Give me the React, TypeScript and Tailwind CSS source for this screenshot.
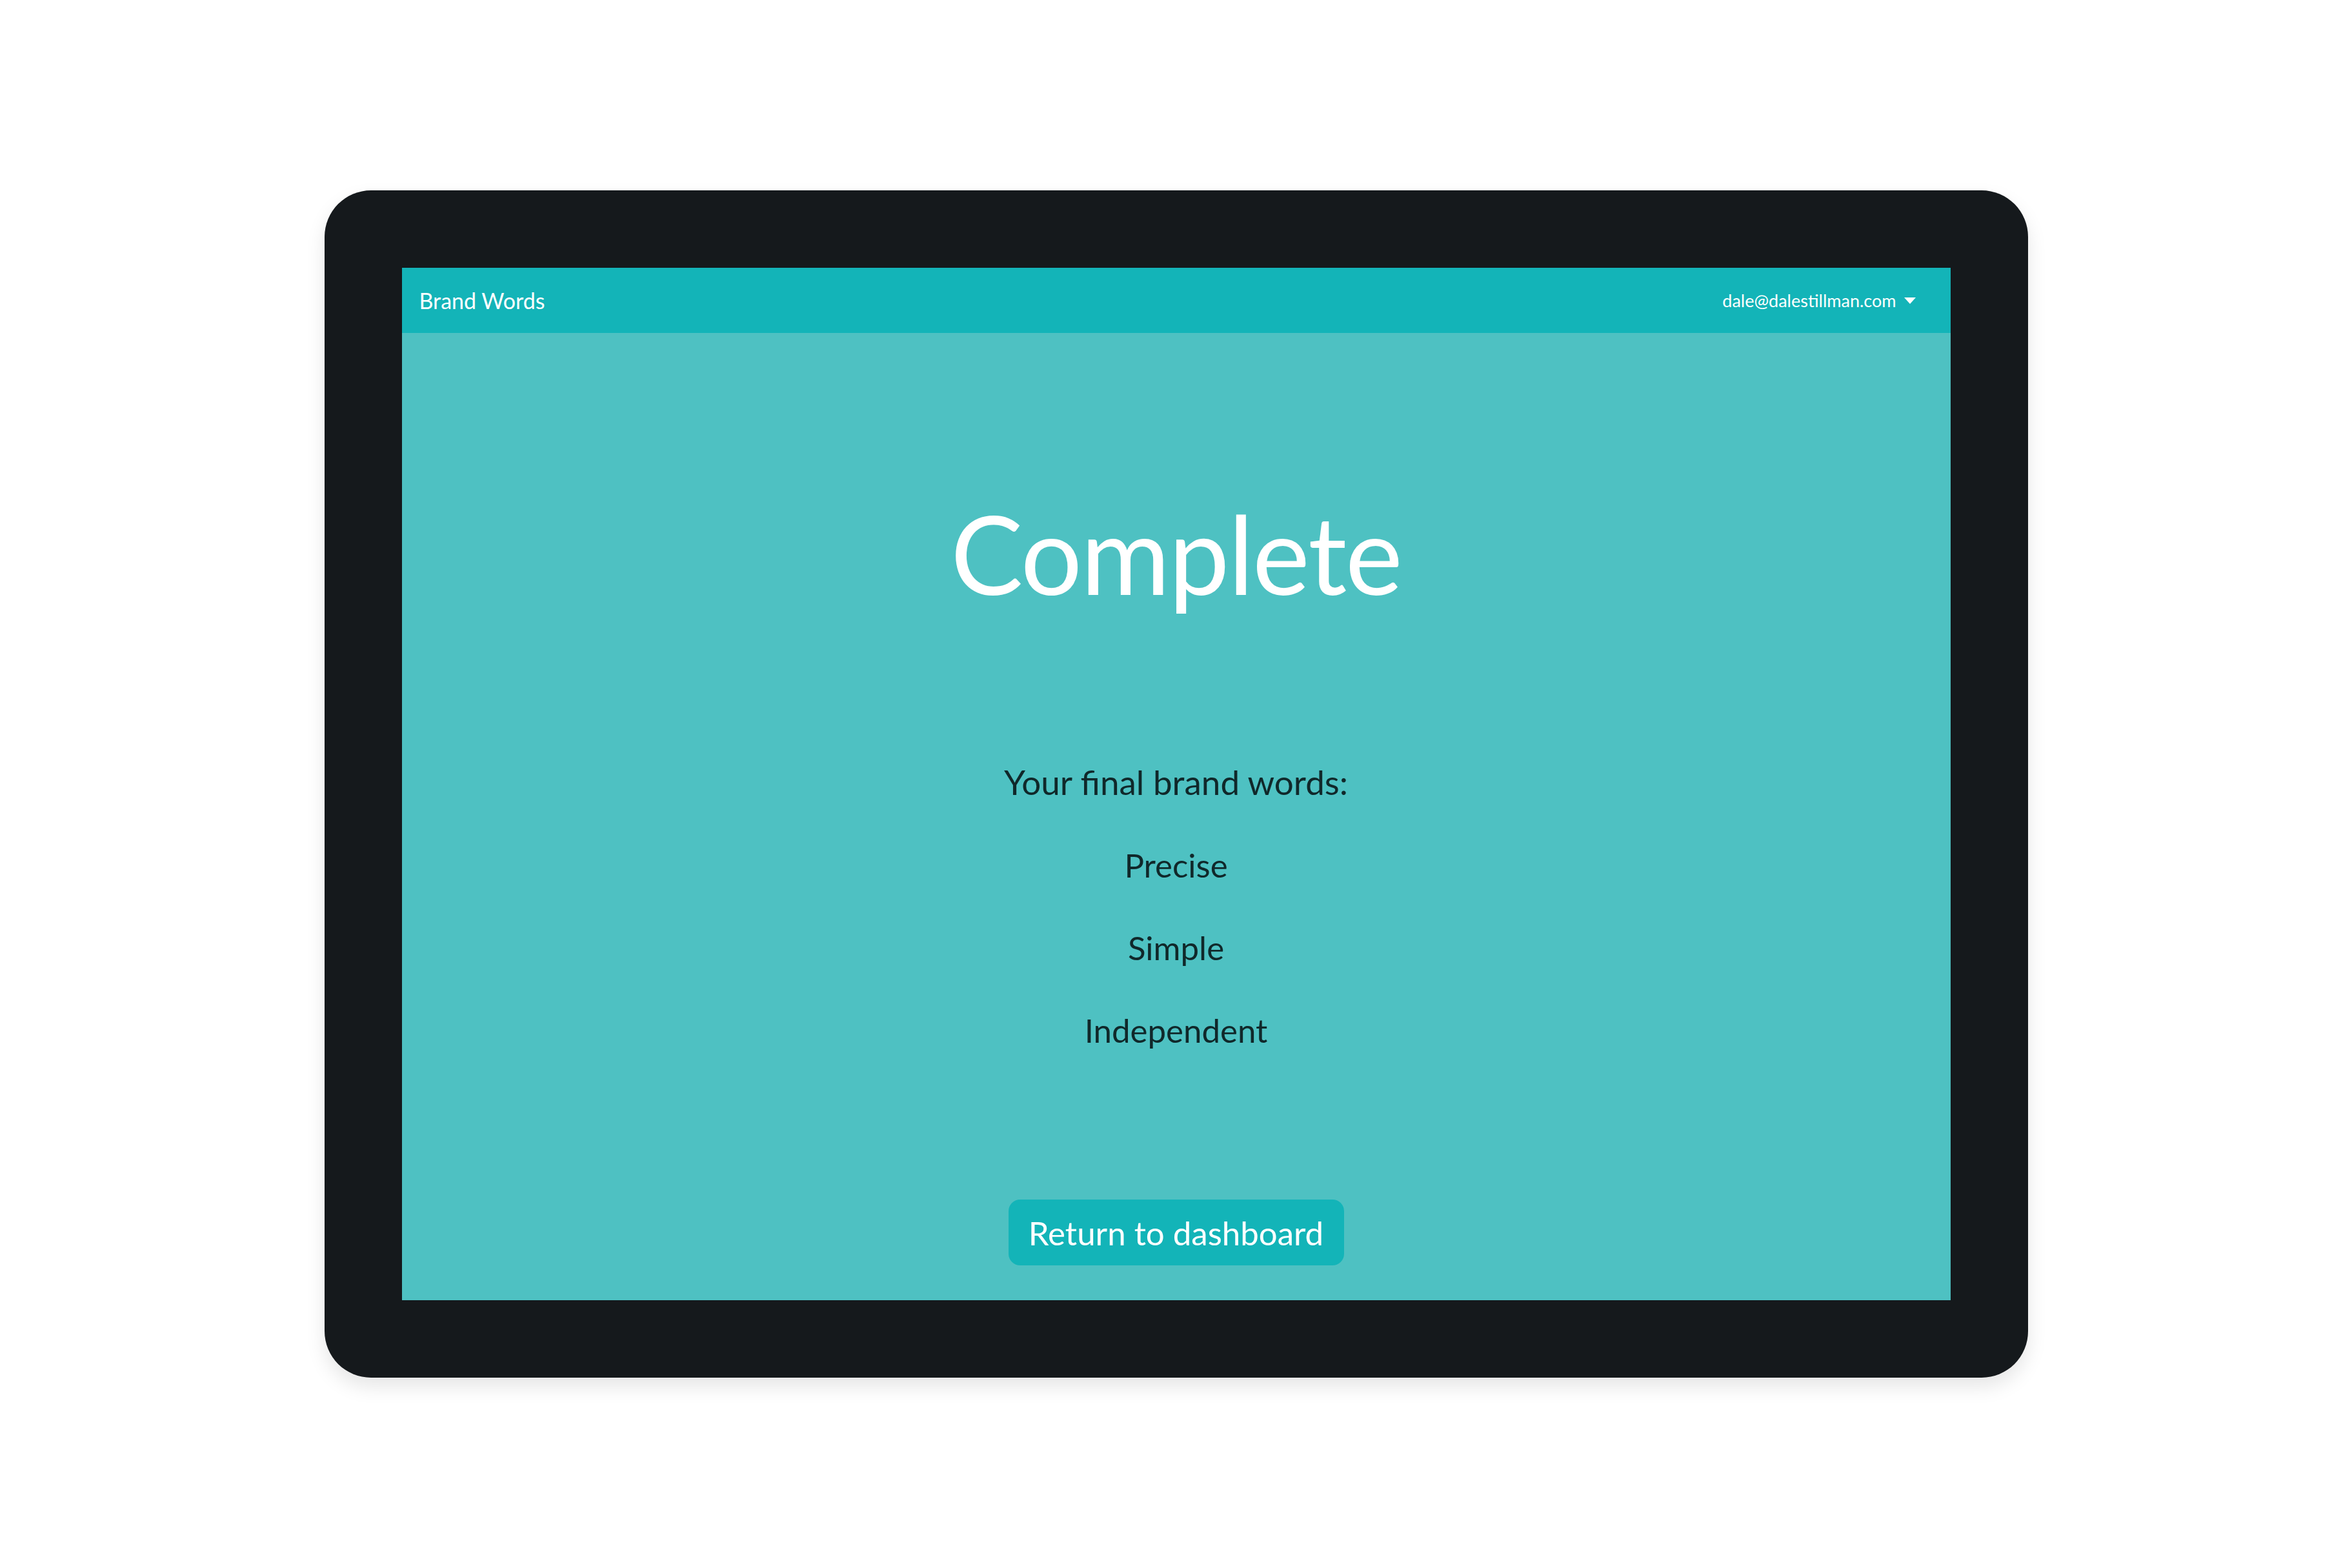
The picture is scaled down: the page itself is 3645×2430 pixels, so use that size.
import React from "react";

export default function App() {
  return (
    <div
      className="flex h-[2430px] w-full items-center justify-center bg-white"
      style={{ fontFamily: "Lato, 'Noto Sans', sans-serif" }}
    >
      <div className="rounded-[72px] bg-[#15191c] p-[120px] shadow-[0_14px_30px_rgba(0,0,0,0.10)]">
        <div className="flex h-[1600px] w-[2400px] flex-col bg-[#4ec1c2]">
          <div className="flex h-[101px] items-center justify-between bg-[#13b4b8] pl-[27px] pr-[54px]">
            <span className="text-[34px] leading-none text-white">Brand Words</span>
            <div className="flex items-center gap-[12px]">
              <span className="text-[27px] leading-none text-white">dale@dalestillman.com</span>
              <svg width="18" height="10" viewBox="0 0 18 10">
                <path d="M0 0 L18 0 L9 10 Z" fill="#ffffff" />
              </svg>
            </div>
          </div>
          <div className="flex flex-1 flex-col items-center">
            <h1 className="mt-[257px] text-[168px] leading-none tracking-[-2px] text-white">
              Complete
            </h1>
            <p className="mt-[244px] text-[53px] leading-none text-[#10282a]">
              Your final brand words:
            </p>
            <div className="mt-[77px] flex flex-col items-center gap-[77px] text-[51px] leading-none text-[#10282a]">
              <p>Precise</p>
              <p>Simple</p>
              <p>Independent</p>
            </div>
            <button className="mt-[237px] flex h-[102px] w-[520px] items-center justify-center rounded-[18px] bg-[#13b4b8] text-[51px] leading-none text-white">
              Return to dashboard
            </button>
          </div>
        </div>
      </div>
    </div>
  );
}
